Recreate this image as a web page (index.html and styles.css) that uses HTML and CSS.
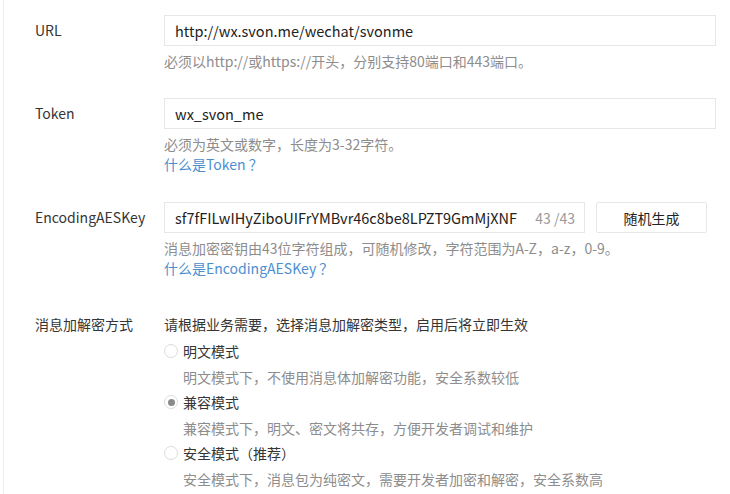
FILE: index.html
```html
<!DOCTYPE html>
<html lang="zh-CN">
<head>
<meta charset="utf-8">
<title>服务器配置</title>
<link rel="stylesheet" href="styles.css">
</head>
<body>
<div class="page">
  <div class="row row-url">
    <div class="label">URL</div>
    <div class="field">
      <div class="input wide"><span class="value">http://wx.svon.me/wechat/svonme</span></div>
      <p class="tip">必须以http://或https://开头，分别支持80端口和443端口。</p>
    </div>
  </div>

  <div class="row row-token">
    <div class="label">Token</div>
    <div class="field">
      <div class="input wide"><span class="value">wx_svon_me</span></div>
      <p class="tip">必须为英文或数字，长度为3-32字符。</p>
      <a class="link" href="#">什么是Token <span class="q">？</span></a>
    </div>
  </div>

  <div class="row row-aes">
    <div class="label">EncodingAESKey</div>
    <div class="field">
      <div class="inline">
        <div class="input key"><span class="value">sf7fFILwIHyZiboUIFrYMBvr46c8be8LPZT9GmMjXNF</span><span class="counter">43 /43</span></div>
        <button class="btn" type="button">随机生成</button>
      </div>
      <p class="tip">消息加密密钥由43位字符组成，可随机修改，字符范围为A-Z，a-z，0-9。</p>
      <a class="link" href="#">什么是EncodingAESKey <span class="q">？</span></a>
    </div>
  </div>

  <div class="row row-mode">
    <div class="label">消息加解密方式</div>
    <div class="field modes">
      <p class="desc">请根据业务需要，选择消息加解密类型，启用后将立即生效</p>
      <div class="radio"><span class="dot"></span><span>明文模式</span></div>
      <p class="tip sub">明文模式下，不使用消息体加解密功能，安全系数较低</p>
      <div class="radio"><span class="dot checked"></span><span>兼容模式</span></div>
      <p class="tip sub">兼容模式下，明文、密文将共存，方便开发者调试和维护</p>
      <div class="radio"><span class="dot"></span><span>安全模式（推荐）</span></div>
      <p class="tip sub">安全模式下，消息包为纯密文，需要开发者加密和解密，安全系数高</p>
    </div>
  </div>
</div>
</body>
</html>
```

FILE: styles.css
```css
html, body {
  margin: 0;
  padding: 0;
  background: #ffffff;
}

body {
  font-family: "Noto Sans CJK SC", "Noto Sans", sans-serif;
  font-size: 14px;
  color: #353535;
  width: 730px;
  height: 494px;
  overflow: hidden;
}

.page {
  margin-left: 3px;
  border-left: 1px solid #eeeeee;
  padding-left: 31px;
  min-height: 494px;
  box-sizing: border-box;
}

.row {
  display: flex;
  align-items: flex-start;
}

.row-url { padding-top: 15px; }
.row-token { padding-top: 27px; }
.row-aes { padding-top: 27px; }
.row-mode { padding-top: 30px; }

.label {
  width: 129px;
  flex: none;
  line-height: 31px;
  white-space: nowrap;
}

.field {
  display: flex;
  flex-direction: column;
  align-items: flex-start;
}

.input {
  height: 31px;
  box-sizing: border-box;
  border: 1px solid #e7e7eb;
  display: flex;
  align-items: center;
  padding: 0 10px;
  color: #222222;
  font-size: 14.5px;
  white-space: nowrap;
}

.input.wide { width: 552px; }

.input.key {
  width: 421px;
  padding-right: 9px;
}

.input.key .value { flex: 1; overflow: hidden; }

.counter {
  color: #9a9a9a;
  font-size: 14px;
  margin-left: 10px;
}

.inline {
  display: flex;
  gap: 11px;
}

.btn {
  width: 111px;
  height: 31px;
  border: 1px solid #e4e8eb;
  background: #ffffff;
  border-radius: 2px;
  font-family: inherit;
  font-size: 14px;
  color: #222222;
  padding: 0;
}

.tip {
  margin: 5px 0 0;
  line-height: 20px;
  color: #8d8d8d;
  white-space: nowrap;
}

.link {
  line-height: 21px;
  color: #4b8fd1;
  text-decoration: none;
}

.link .q {
  font-family: "Noto Sans CJK TC", sans-serif;
}

.modes .desc {
  margin: 0;
  line-height: 31px;
  color: #353535;
}

.radio {
  display: flex;
  align-items: center;
  gap: 5px;
  height: 26px;
  margin-top: -2px;
}

.dot {
  width: 14px;
  height: 14px;
  box-sizing: border-box;
  border: 1px solid #dcdcdc;
  border-radius: 50%;
  display: flex;
  align-items: center;
  justify-content: center;
}

.dot.checked::after {
  content: "";
  width: 7px;
  height: 7px;
  border-radius: 50%;
  background: #8a8a8a;
}

.tip.sub {
  margin: 0 0 0 19px;
  line-height: 27px;
}
```
